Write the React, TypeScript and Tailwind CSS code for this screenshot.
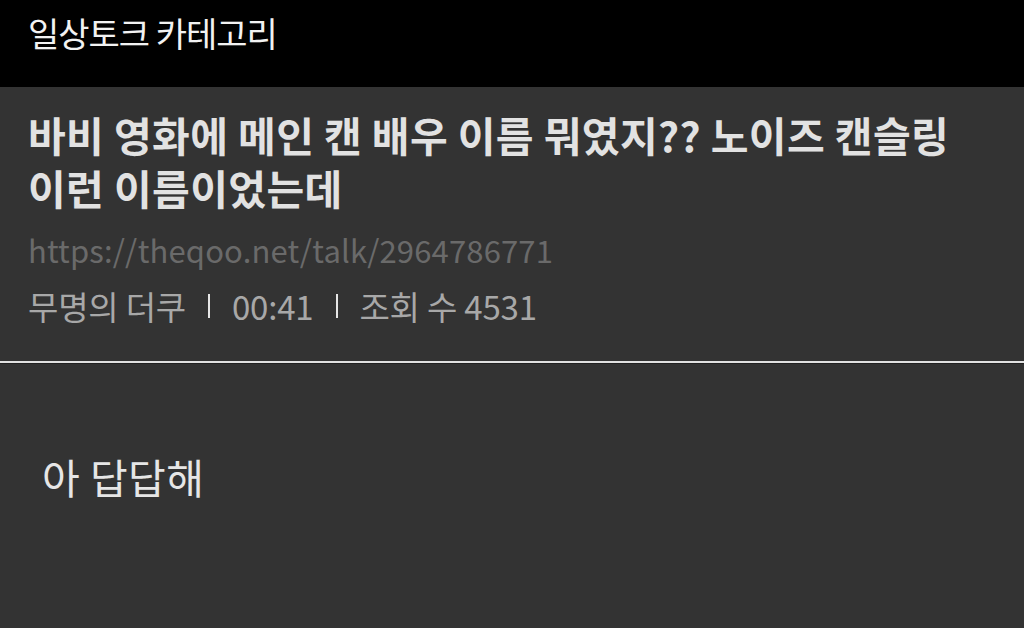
export default function App() {
  const font = { fontFamily: '"Noto Sans CJK KR", "Noto Sans", sans-serif' };

  return (
    <div className="w-[1024px] h-[628px] bg-[#333333] flex flex-col overflow-hidden" style={font}>
      {/* Category header */}
      <div className="h-[87px] bg-black flex items-center px-[28px] shrink-0">
        <h1 className="text-[34px] text-[#f2f2f2] tracking-[-1px] leading-none pb-[22px]">일상토크 카테고리</h1>
      </div>

      {/* Post info */}
      <div className="px-[28px] pt-[21px] pb-[35px] flex flex-col">
        <h2 className="text-[41px] font-bold text-[#e2e2e2] leading-[53px] tracking-[0.4px]">
          바비 영화에 메인 캔 배우 이름 뭐였지?? 노이즈 캔슬링
          <br />
          이런 이름이었는데
        </h2>
        <div className="mt-[16px] text-[31px] text-[#6a6a6a] leading-[40px] tracking-[0.15px]">
          https://theqoo.net/talk/2964786771
        </div>
        <div className="mt-[16px] flex items-center text-[33px] text-[#a8a8a8] leading-[40px] tracking-[-0.2px]">
          <span>무명의 더쿠</span>
          <span className="ml-[22px] mr-[22px] w-[2px] h-[24px] bg-[#e6e6e6]" />
          <span>00:41</span>
          <span className="ml-[23px] mr-[21px] w-[2px] h-[24px] bg-[#e6e6e6]" />
          <span>조회 수 4531</span>
        </div>
      </div>

      <div className="h-[2px] bg-[#e2e2e2] shrink-0" />
      <div className="h-[1px] bg-[#222222] shrink-0" />

      {/* Body */}
      <div className="px-[42px] pt-[87px]">
        <p className="text-[41px] text-[#e6e6e6] leading-[50px] tracking-[0.5px]">아 답답해</p>
      </div>
    </div>
  );
}
